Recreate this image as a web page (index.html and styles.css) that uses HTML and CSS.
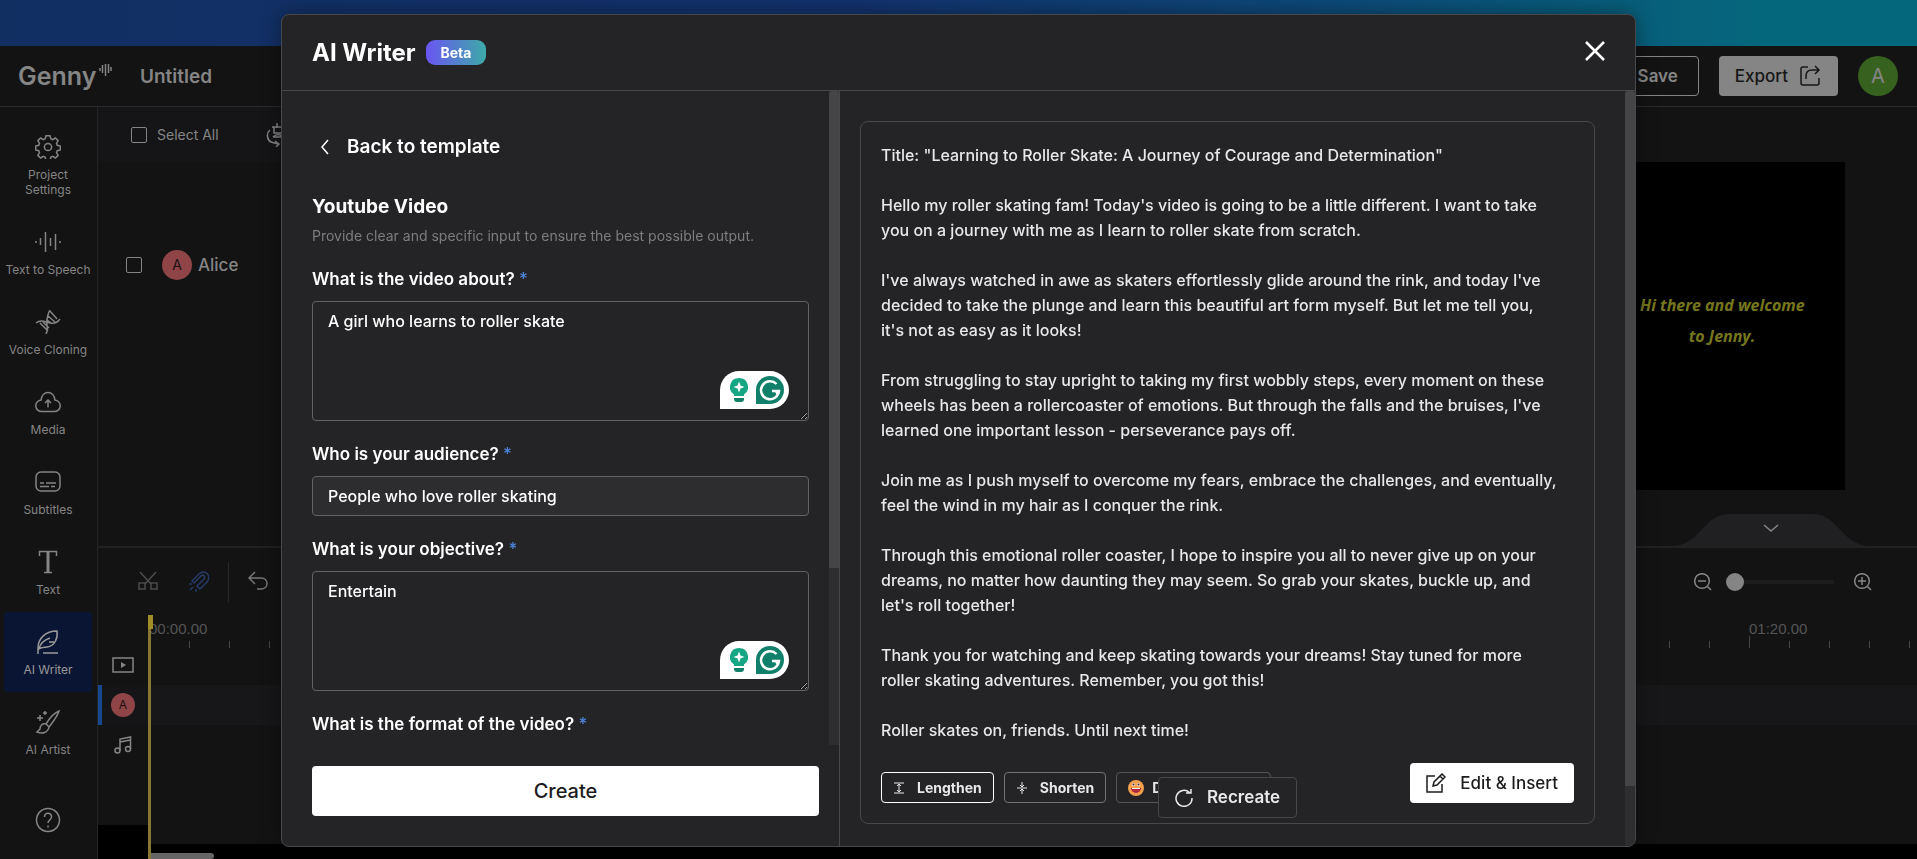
FILE: index.html
```
<!DOCTYPE html>
<html lang="en">
<head>
    <meta charset="UTF-8">
    <meta name="viewport" content="width=device-width, initial-scale=1.0">
    <title>Genny - AI Writer</title>
    <link rel="stylesheet" href="styles.css">
</head>
<body>
    <div class="app">
        <div class="promo"></div>

        <header class="topbar">
            <div class="logo">Genny
                <svg class="logo-wave" width="13" height="14" viewBox="0 0 13 14"><path d="M1 5v3M3.5 2v8M6.5 1v12M9.5 1v9M12 4v4"/></svg>
            </div>
            <span class="project-name">Untitled</span>
            <div class="topbar-actions">
                <button class="btn-save">Save</button>
                <button class="btn-export">Export
                    <svg width="24" height="24" viewBox="0 0 24 24"><path d="M10 3H5a2 2 0 0 0-2 2v14a2 2 0 0 0 2 2h14a2 2 0 0 0 2-2v-5M8 15v-3c0-4 2-6 6-6h7M17 2l4 4-4 4"/></svg>
                </button>
                <span class="user-avatar">A</span>
            </div>
        </header>

        <div class="workspace">
            <nav class="sidebar">
                <a href="#" class="nav-item">
                    <svg width="26" height="24" viewBox="0 0 26 24"><circle cx="13" cy="12" r="3.6"/><path d="M11 .8h4l.8 3 1.8.8 2.8-1.6 2.7 2.7-1.6 2.8.8 1.8 3 .8v3.8l-3 .8-.8 1.8 1.6 2.8-2.7 2.7-2.8-1.6-1.8.8-.8 3h-4l-.8-3-1.8-.8-2.8 1.6-2.7-2.7 1.6-2.8-.8-1.8-3-.8v-3.8l3-.8.8-1.8-1.6-2.8 2.7-2.7 2.8 1.6 1.8-.8z"/></svg>
                    <span>Project Settings</span>
                </a>
                <a href="#" class="nav-item">
                    <svg width="26" height="24" viewBox="0 0 26 24"><path d="M1 11v2M5.500 8v7M10.500 2v20M15.500 8v8M20.500 4v16M25 11v2"/></svg>
                    <span>Text to Speech</span>
                </a>
                <a href="#" class="nav-item">
                    <svg width="26" height="24" viewBox="0 0 26 24"><path d="M1 13c5-4 9-1 14 0 4 1 7 0 10-4M11 24c3-5 0-9 1-14 .5-4 1-7 3-10M5 13l8 8M8 12l6 6M15 1l7 8M13 6l7 6M12 10l4 3"/></svg>
                    <span>Voice Cloning</span>
                </a>
                <a href="#" class="nav-item">
                    <svg width="26" height="24" viewBox="0 0 26 24"><path d="M7 21.500a5.800 5.800 0 0 1-.8-11.600C6.500 5.500 9.300 2.500 13 2.500s6.500 3 6.800 7.400A5.800 5.800 0 0 1 19 21.500zM13 17.500v-7M10 13l3-3 3 3"/></svg>
                    <span>Media</span>
                </a>
                <a href="#" class="nav-item">
                    <svg width="26" height="24" viewBox="0 0 26 24"><rect x="1" y="2" width="24" height="19" rx="5"/><path d="M5 13h4M11 13h10M5 16.500h9M16 16.500h4"/></svg>
                    <span>Subtitles</span>
                </a>
                <a href="#" class="nav-item">
                    <svg width="26" height="24" viewBox="0 0 26 24"><path d="M4.500 6V1.500h17V6M9 22.500h8"/><path d="M13 2v20.500" stroke-width="3"/></svg>
                    <span>Text</span>
                </a>
                <a href="#" class="nav-item active">
                    <svg width="26" height="24" viewBox="0 0 26 24"><path d="M3 24v-6c0-9 7-17 19-17 1 7-2 15-10 16-4 .6-6 .4-8 2 1-5 5-9 11-11M14 12h5M8 23h15"/></svg>
                    <span>AI Writer</span>
                </a>
                <a href="#" class="nav-item">
                    <svg width="26" height="24" viewBox="0 0 26 24"><path d="M24 1c-5 2-10 8-13 13l3 3c4-5 8-10 10-16zM11 14c-4-1-6 2-6 5l-3 3c5 2 11 1 12-5M5 5v6M2 8h6M10 1v4M8 3h4"/></svg>
                    <span>AI Artist</span>
                </a>
                <a href="#" class="nav-help" aria-label="Help">
                    <svg width="26" height="26" viewBox="0 0 26 26"><circle cx="13" cy="13" r="11.500"/><path d="M9.500 10c0-5 7-5 7 0 0 3-3.500 3-3.500 6M13 18.500v2"/></svg>
                </a>
            </nav>

            <main class="editor">
                <section class="stage">
                    <div class="voices">
                        <div class="select-all">
                            <input type="checkbox" id="select-all">
                            <label for="select-all">Select All</label>
                            <svg width="24" height="24" viewBox="0 0 24 24"><path d="M5 7C1 10 2 17 6 19l7 2M10 18l4 3-3 3M7 4h12M12 0v5M9 4v6h8M8 14c4-4 8-2 10 0M8 14h10"/></svg>
                        </div>
                        <div class="voice-row">
                            <input type="checkbox" id="voice-alice">
                            <span class="voice-avatar">A</span>
                            <label for="voice-alice">Alice</label>
                        </div>
                    </div>
                    <div class="preview">
                        <div class="canvas">
                            <p class="caption">Hi there and welcome<br>to Jenny.</p>
                        </div>
                        <button class="collapse" aria-label="Collapse timeline">
                            <svg width="200" height="32" viewBox="0 0 200 32"><path class="tab" d="M0 32C30 32 32 0 58 0h84c26 0 28 32 58 32z"/><path d="M93 11l7 6 7-6"/></svg>
                        </button>
                    </div>
                </section>

                <section class="timeline">
                    <div class="toolbar">
                        <button class="tool" aria-label="Split">
                            <svg width="20" height="20" viewBox="0 0 20 20"><path d="M2 1l11 12M18 1L7 13M1 12h6v6H1zM13 12h6v6h-6z"/></svg>
                        </button>
                        <button class="tool snap" aria-label="Snap">
                            <svg width="22" height="22" viewBox="0 0 22 22"><path d="M4 10l7-7c6-6 13 2 8 8l-7 7-3-3 7-7c2-3-1-5-3-3l-7 7zM1 13h3M2 19l3-3M8 21v-3"/></svg>
                        </button>
                        <span class="divider"></span>
                        <button class="tool undo" aria-label="Undo">
                            <svg width="20" height="20" viewBox="0 0 20 20"><path d="M7 1L1 7l6 6M1 7h12c8 0 8 11 0 11H9"/></svg>
                        </button>
                        <div class="zoom">
                            <svg width="18" height="18" viewBox="0 0 18 18"><circle cx="8" cy="8" r="7.300"/><path d="M4 8h8M13.500 13.500L17 17"/></svg>
                            <input type="range" min="0" max="100" value="0" aria-label="Timeline zoom">
                            <svg width="18" height="18" viewBox="0 0 18 18"><circle cx="8" cy="8" r="7.300"/><path d="M4 8h8M8 4v8M13.500 13.500L17 17"/></svg>
                        </div>
                    </div>
                    <div class="tracks">
                        <div class="track-heads">
                            <div class="track-head">
                                <svg width="22" height="16" viewBox="0 0 22 16"><rect x="1" y="1" width="20" height="14"/><path class="fill" d="M9 5l5 3-5 3z"/></svg>
                            </div>
                            <div class="track-head selected"><span class="voice-avatar small">A</span></div>
                            <div class="track-head">
                                <svg width="18" height="18" viewBox="0 0 18 18"><circle cx="3.500" cy="14.500" r="2.500"/><circle cx="14" cy="13" r="2.500"/><path d="M6 14.500V3l10.500-2v12M6 6l10.500-2"/></svg>
                            </div>
                        </div>
                        <div class="lanes">
                            <div class="ruler">
                                <span>00:00.00</span><span>00:20.00</span><span>00:40.00</span><span>01:00.00</span><span>01:20.00</span>
                            </div>
                            <div class="lane"></div>
                            <div class="scroll-x"></div>
                            <div class="playhead"></div>
                        </div>
                    </div>
                </section>
            </main>
        </div>
    </div>

    <div class="overlay">
        <div class="modal" role="dialog" aria-labelledby="modal-title">
            <header class="modal-header">
                <h1 id="modal-title">AI Writer</h1>
                <span class="badge">Beta</span>
                <button class="close" aria-label="Close">
                    <svg width="20" height="20" viewBox="0 0 20 20"><path d="M1 1l18 18M19 1L1 19"/></svg>
                </button>
            </header>

            <div class="modal-body">
                <form class="form-panel">
                    <div class="form-scroll">
                        <div class="fields">
                            <a href="#" class="back">
                                <svg width="8" height="16" viewBox="0 0 8 16"><path d="M7 1L1 8l6 7"/></svg>
                                Back to template
                            </a>
                            <h2>Youtube Video</h2>
                            <p class="hint">Provide clear and specific input to ensure the best possible output.</p>

                            <label for="about">What is the video about? <span class="required">*</span></label>
                            <div class="area">
                                <textarea id="about">A girl who learns to roller skate</textarea>
                                <div class="assistant">
                                    <svg width="18" height="24" viewBox="0 0 18 24"><path fill="#15a683" d="M9 0a9 9 0 0 0-5 16.500V18h10v-1.500A9 9 0 0 0 9 0z"/><path fill="#fff" d="M9 3.500l1.500 4 4 1.500-4 1.500-1.500 4-1.500-4-4-1.500 4-1.500z"/><path fill="#11806a" d="M4 20h10v1a3 3 0 0 1-3 3H7a3 3 0 0 1-3-3z"/></svg>
                                    <svg width="28" height="28" viewBox="0 0 28 28"><path fill="#11806a" d="M14 0a14 14 0 0 1 0 28H0V14A14 14 0 0 1 14 0z"/><path fill="none" stroke="#fff" stroke-width="2.500" d="M20.500 8A9 9 0 1 0 23 15h-7M20 15l2 4"/></svg>
                                </div>
                            </div>

                            <label for="audience">Who is your audience? <span class="required">*</span></label>
                            <input type="text" id="audience" value="People who love roller skating">

                            <label for="objective">What is your objective? <span class="required">*</span></label>
                            <div class="area">
                                <textarea id="objective">Entertain</textarea>
                                <div class="assistant">
                                    <svg width="18" height="24" viewBox="0 0 18 24"><path fill="#15a683" d="M9 0a9 9 0 0 0-5 16.500V18h10v-1.500A9 9 0 0 0 9 0z"/><path fill="#fff" d="M9 3.500l1.500 4 4 1.500-4 1.500-1.500 4-1.500-4-4-1.500 4-1.500z"/><path fill="#11806a" d="M4 20h10v1a3 3 0 0 1-3 3H7a3 3 0 0 1-3-3z"/></svg>
                                    <svg width="28" height="28" viewBox="0 0 28 28"><path fill="#11806a" d="M14 0a14 14 0 0 1 0 28H0V14A14 14 0 0 1 14 0z"/><path fill="none" stroke="#fff" stroke-width="2.500" d="M20.500 8A9 9 0 1 0 23 15h-7M20 15l2 4"/></svg>
                                </div>
                            </div>

                            <label for="format">What is the format of the video? <span class="required">*</span></label>
                            <input type="text" id="format">
                        </div>
                        <div class="scrollbar"><div class="thumb form-thumb"></div></div>
                    </div>
                    <button type="button" class="btn-create">Create</button>
                </form>

                <section class="result-panel">
                    <div class="result">
                        <p>Title: "Learning to Roller Skate: A Journey of Courage and Determination"</p>
                        <p>Hello my roller skating fam! Today's video is going to be a little different. I want to take you on a journey with me as I learn to roller skate from scratch.</p>
                        <p>I've always watched in awe as skaters effortlessly glide around the rink, and today I've decided to take the plunge and learn this beautiful art form myself. But let me tell you, it's not as easy as it looks!</p>
                        <p>From struggling to stay upright to taking my first wobbly steps, every moment on these wheels has been a rollercoaster of emotions. But through the falls and the bruises, I've learned one important lesson - perseverance pays off.</p>
                        <p>Join me as I push myself to overcome my fears, embrace the challenges, and eventually, feel the wind in my hair as I conquer the rink.</p>
                        <p>Through this emotional roller coaster, I hope to inspire you all to never give up on your dreams, no matter how daunting they may seem. So grab your skates, buckle up, and let's roll together!</p>
                        <p>Thank you for watching and keep skating towards your dreams! Stay tuned for more roller skating adventures. Remember, you got this!</p>
                        <p>Roller skates on, friends. Until next time!</p>
                        <div class="result-actions">
                            <button class="chip primary">
                                <svg width="12" height="12" viewBox="0 0 12 12"><path d="M1 1h10M1 11h10M6 2v8M4 4l2-2 2 2M4 8l2 2 2-2"/></svg>
                                Lengthen
                            </button>
                            <button class="chip">
                                <svg width="12" height="12" viewBox="0 0 12 12"><path d="M1 6h10M6 0v4M6 8v4M4 3l2 2 2-2M4 9l2-2 2 2"/></svg>
                                Shorten
                            </button>
                            <button class="chip tone">
                                <svg class="emoji" width="16" height="16" viewBox="0 0 16 16"><circle cx="8" cy="8" r="8" fill="#f5a04c"/><circle cx="5.500" cy="4.500" r="1.500" fill="#fff"/><circle cx="10.500" cy="4.500" r="1.500" fill="#fff"/><circle cx="5.500" cy="4.500" r="1" fill="#43251c"/><circle cx="10.500" cy="4.500" r="1" fill="#43251c"/><path fill="#b3283c" d="M3 8h10a5 5 0 0 1-10 0z"/><path fill="#fff" d="M4 8h8v1H4z"/></svg>
                                Default tone
                            </button>
                            <button class="btn-insert">
                                <svg width="20" height="20" viewBox="0 0 20 20"><path d="M9 3H1v16h15v-8M7 13l1-4 8-8 3 3-8 8zM14 3l3 3"/></svg>
                                Edit &amp; Insert
                            </button>
                        </div>
                        <button class="btn-recreate">
                            <svg width="18" height="18" viewBox="0 0 18 18"><path d="M14.500 3.500A8 8 0 1 0 17 9M11 4h5V0"/></svg>
                            Recreate
                        </button>
                    </div>
                    <div class="scrollbar"><div class="thumb result-thumb"></div></div>
                </section>
            </div>
        </div>
    </div>
</body>
</html>
```
FILE: styles.css
```
* {
    box-sizing: border-box;
}

body {
    margin: 0;
    font-family: Inter, "Liberation Sans", sans-serif;
    font-size: 16px;
    color: #fff;
    background: #000;
    overflow: hidden;
}

h1, h2, p {
    margin: 0;
}

button, input, textarea {
    font: inherit;
    color: inherit;
    margin: 0;
}

button {
    background: none;
    border: none;
    padding: 0;
    cursor: pointer;
}

a {
    color: inherit;
    text-decoration: none;
}

svg {
    flex: none;
    fill: none;
    stroke: currentColor;
    stroke-width: 1.5;
}

.assistant svg, .emoji {
    stroke: none;
}

/* App behind the dialog */
.app {
    display: flex;
    flex-direction: column;
    height: 100vh;
    color: #858585;
    background: #131313;
}

.promo {
    height: 46px;
    background: linear-gradient(90deg, #122f62 0%, #12326c 45%, #0d4a78 70%, #05677c 92%);
}

.topbar {
    display: flex;
    align-items: center;
    height: 61px;
    padding: 0 19px 0 18px;
    border-bottom: 1px solid #2b2b2b;
}

.logo {
    display: flex;
    gap: 3px;
    width: 122px;
    font-size: 25px;
    font-weight: 600;
    line-height: 30px;
}

.logo-wave {
    margin-top: 2px;
}

.project-name {
    font-size: 19px;
    font-weight: 600;
}

.topbar-actions {
    display: flex;
    align-items: center;
    gap: 20px;
    margin-left: auto;
}

.btn-save, .btn-export {
    height: 40px;
    border-radius: 4px;
    font-size: 17px;
    font-weight: 600;
}

.btn-save {
    width: 120px;
    padding-right: 20px;
    border: 1px solid #858585;
    text-align: right;
}

.btn-export {
    display: flex;
    align-items: center;
    gap: 10px;
    padding: 0 16px;
    color: #171717;
    background: #858585;
    font-weight: 500;
}

.user-avatar {
    width: 40px;
    border-radius: 50%;
    background: #37611f;
    font-size: 20px;
    line-height: 40px;
    text-align: center;
}

.workspace {
    display: flex;
    flex: 1;
    min-height: 0;
}

.sidebar {
    display: flex;
    flex-direction: column;
    flex: none;
    width: 98px;
    padding: 10px 5px 24px 4px;
    border-right: 1px solid #242424;
}

.nav-item {
    display: flex;
    flex-direction: column;
    align-items: center;
    gap: 8px;
    padding: 18px 0 15px;
    font-size: 12px;
    line-height: 15px;
    text-align: center;
}

.nav-item span {
    max-width: 86px;
}

.nav-item:first-child span {
    width: 60px;
}

.nav-item.active {
    color: #999;
    background: #0a1533;
    border-radius: 4px;
}

.nav-help {
    margin: auto auto 0;
    height: 28px;
}

.editor {
    display: flex;
    flex-direction: column;
    flex: 1;
    min-width: 0;
}

.stage {
    display: flex;
    flex: 1;
    min-height: 0;
}

.voices {
    width: 520px;
}

input[type="checkbox"] {
    appearance: none;
    width: 16px;
    height: 16px;
    border: 1px solid #858585;
    border-radius: 2px;
}

.select-all {
    display: flex;
    align-items: center;
    gap: 10px;
    height: 55px;
    padding-left: 33px;
    background: #151518;
    font-size: 14px;
}

.select-all svg {
    margin-left: 36px;
}

.voice-row {
    display: flex;
    align-items: center;
    margin-top: 88px;
    padding-left: 28px;
    font-size: 17px;
    font-weight: 500;
}

.voice-avatar {
    width: 30px;
    margin: 0 6px 0 20px;
    border-radius: 50%;
    color: #1b1112;
    background: #8f4448;
    font-size: 14px;
    font-weight: 400;
    line-height: 30px;
    text-align: center;
}

.voice-avatar.small {
    width: 24px;
    margin: 0;
    font-size: 12px;
    line-height: 24px;
}

.preview {
    display: flex;
    flex-direction: column;
    align-items: flex-end;
    flex: 1;
    padding: 55px 0 0;
}

.canvas {
    height: 328px;
    aspect-ratio: 16 / 9;
    margin-right: 72px;
    padding: 128px 41px 0;
    background: #000;
}

.caption {
    width: 164px;
    margin-left: auto;
    color: #76771d;
    font-family: "Open Sans", sans-serif;
    font-size: 16px;
    font-style: italic;
    font-weight: 700;
    line-height: 31px;
    text-align: center;
    white-space: nowrap;
}

.collapse {
    height: 32px;
    margin: auto 46px 0 0;
}

.collapse .tab {
    fill: #202023;
    stroke: none;
}

.timeline {
    display: flex;
    flex-direction: column;
    height: 313px;
    border-top: 2px solid #222;
}

.toolbar {
    display: flex;
    align-items: center;
    height: 67px;
    padding: 0 45px 0 40px;
}

.tool {
    height: 22px;
    margin-right: 30px;
    color: #4c4c4c;
}

.tool.snap {
    margin-right: 18px;
    color: #263c66;
}

.tool.undo {
    margin-left: 19px;
    color: #777;
}

.divider {
    width: 1px;
    height: 40px;
    background: #292929;
}

.zoom {
    display: flex;
    align-items: center;
    gap: 14px;
    margin-left: auto;
    color: #858585;
}

.zoom input {
    appearance: none;
    width: 108px;
    height: 4px;
    margin-right: 6px;
    background: #1c1c1c;
}

.zoom input::-webkit-slider-thumb {
    appearance: none;
    width: 18px;
    height: 18px;
    border-radius: 50%;
    background: #858585;
}

.tracks {
    display: flex;
    flex: 1;
    min-height: 0;
    background: #000;
}

.track-heads {
    align-self: flex-start;
    width: 50px;
    height: 210px;
    padding-top: 30px;
    background: #131313;
}

.track-head {
    display: flex;
    align-items: center;
    justify-content: center;
    height: 40px;
    border-left: 4px solid transparent;
    padding-right: 4px;
}

.track-head.selected {
    border-color: #16498f;
    background: #151517;
}

.track-head .fill {
    fill: currentColor;
    stroke: none;
}

.lanes {
    position: relative;
    flex: 1;
    min-width: 0;
    overflow: hidden;
}

.ruler {
    display: flex;
    height: 70px;
    padding-left: 1px;
    color: #555;
    background: #131313;
    font-family: "Liberation Sans", Arial, sans-serif;
    font-size: 15px;
    line-height: 27px;
}

/* Short tick every 40px, tall tick with the time every 400px */
.ruler span {
    flex: none;
    width: 400px;
    height: 33px;
    background:
        linear-gradient(#444, #444) 0 100% / 1px 12px no-repeat,
        repeating-linear-gradient(90deg, #444 0 1px, transparent 1px 40px) 0 100% / 100% 7px no-repeat;
}

.lane {
    height: 159px;
    background: linear-gradient(#17171a 40px, #131313 40px);
}

.scroll-x {
    width: 66px;
    height: 6px;
    margin-top: 9px;
    border-radius: 3px;
    background: #666;
}

.playhead {
    position: absolute;
    top: 0;
    left: 0;
    width: 3px;
    height: 100%;
    background: #8a7633;
}

.playhead::before {
    content: "";
    display: block;
    width: 5px;
    height: 14px;
    background: #a08e28;
}

/* Dialog */
.overlay {
    position: fixed;
    inset: 0;
    display: flex;
    justify-content: center;
    padding: 14px 16px 12px;
}

.modal {
    display: flex;
    flex-direction: column;
    width: 100%;
    max-width: 1355px;
    overflow: hidden;
    border: 1px solid #48484a;
    border-radius: 8px;
    background: #242426;
    box-shadow: 0 0 20px rgba(0, 0, 0, 0.4);
}

.modal-header {
    display: flex;
    align-items: center;
    gap: 10px;
    flex: none;
    height: 76px;
    padding: 0 30px;
    border-bottom: 1px solid #48484a;
}

.modal-header h1 {
    font-size: 24px;
    font-weight: 700;
}

.badge {
    padding: 0 15px;
    border-radius: 9px;
    background: linear-gradient(90deg, #6b55f2, #3daaa8);
    font-size: 14px;
    font-weight: 700;
    line-height: 25px;
}

.close {
    height: 24px;
    margin-left: auto;
}

.close svg {
    stroke-width: 2.5;
}

.modal-body {
    display: flex;
    flex: 1;
    min-height: 0;
}

.form-panel {
    display: flex;
    flex-direction: column;
    width: 558px;
    border-right: 1px solid #48484a;
}

.form-scroll {
    display: flex;
    flex: 1;
    min-height: 0;
    overflow: hidden;
}

.fields {
    flex: 1;
    padding: 41px 20px 0 30px;
}

.back {
    display: flex;
    align-items: center;
    gap: 18px;
    padding-left: 9px;
    font-size: 19px;
    font-weight: 600;
    line-height: 30px;
}

h2 {
    margin-top: 30px;
    font-size: 19px;
    font-weight: 700;
    line-height: 30px;
}

.hint {
    margin: 3px 0 20px;
    color: #7d7d80;
    font-size: 14px;
    line-height: 22px;
}

.fields label {
    display: block;
    font-size: 17px;
    font-weight: 600;
    line-height: 24px;
}

.required {
    color: #4d84d9;
    font-weight: 500;
}

.fields input, .fields textarea {
    display: block;
    width: 100%;
    padding: 7px 15px;
    border: 1px solid #626265;
    border-radius: 4px;
    outline: none;
    background: transparent;
    font-weight: 500;
    line-height: 24px;
}

.fields input {
    height: 40px;
    margin: 10px 0 21px;
    background: #2d2d2f;
}

.area {
    position: relative;
    margin: 10px 0 21px;
}

.fields textarea {
    height: 120px;
}

.assistant {
    position: absolute;
    right: 20px;
    bottom: 12px;
    display: flex;
    align-items: center;
    gap: 8px;
    padding: 5px 5px 5px 10px;
    border-radius: 20px 20px 20px 0;
    background: #fff;
}

.scrollbar {
    flex: none;
    width: 10px;
    background: #2e2e30;
}

.thumb {
    background: #454548;
    border-radius: 3px 3px 0 0;
}

.form-thumb {
    height: 73%;
}

.result-thumb {
    height: 92%;
}

.btn-create {
    flex: none;
    height: 50px;
    margin: 21px 20px 30px 30px;
    border-radius: 4px;
    color: #1c1c1e;
    background: #fff;
    font-size: 20px;
    font-weight: 500;
}

.result-panel {
    display: flex;
    flex: 1;
    min-width: 0;
}

.result {
    position: relative;
    flex: 1;
    align-self: flex-start;
    margin: 30px 30px 0 20px;
    padding: 21px 20px 20px;
    border: 1px solid #48484a;
    border-radius: 8px;
    color: #e8e8ea;
    line-height: 25px;
}

.result p {
    margin-bottom: 25px;
    padding-right: 15px;
    font-weight: 500;
}

.result-actions {
    display: flex;
    align-items: flex-end;
    gap: 10px;
    margin-top: -5px;
}

.chip {
    display: flex;
    align-items: center;
    gap: 12px;
    height: 31px;
    padding: 0 11px;
    border: 1px solid #727275;
    border-radius: 4px;
    font-size: 14px;
    font-weight: 700;
}

.chip svg {
    stroke-width: 1;
}

.chip.primary {
    border-color: #fff;
}

.chip.tone {
    gap: 8px;
    min-width: 155px;
    border-color: #555558;
}

.btn-insert {
    display: flex;
    align-items: center;
    gap: 14px;
    height: 40px;
    margin-left: auto;
    padding: 0 16px;
    border-radius: 4px;
    color: #1c1c1e;
    background: #fff;
    font-size: 17px;
    font-weight: 500;
}

.btn-recreate {
    position: absolute;
    right: 0;
    bottom: 5px;
    left: 0;
    display: flex;
    align-items: center;
    justify-content: center;
    gap: 14px;
    width: 139px;
    height: 41px;
    margin: 0 auto;
    border: 1px solid #48484a;
    border-radius: 4px;
    background: #242426;
    font-size: 17px;
    font-weight: 600;
}
```
